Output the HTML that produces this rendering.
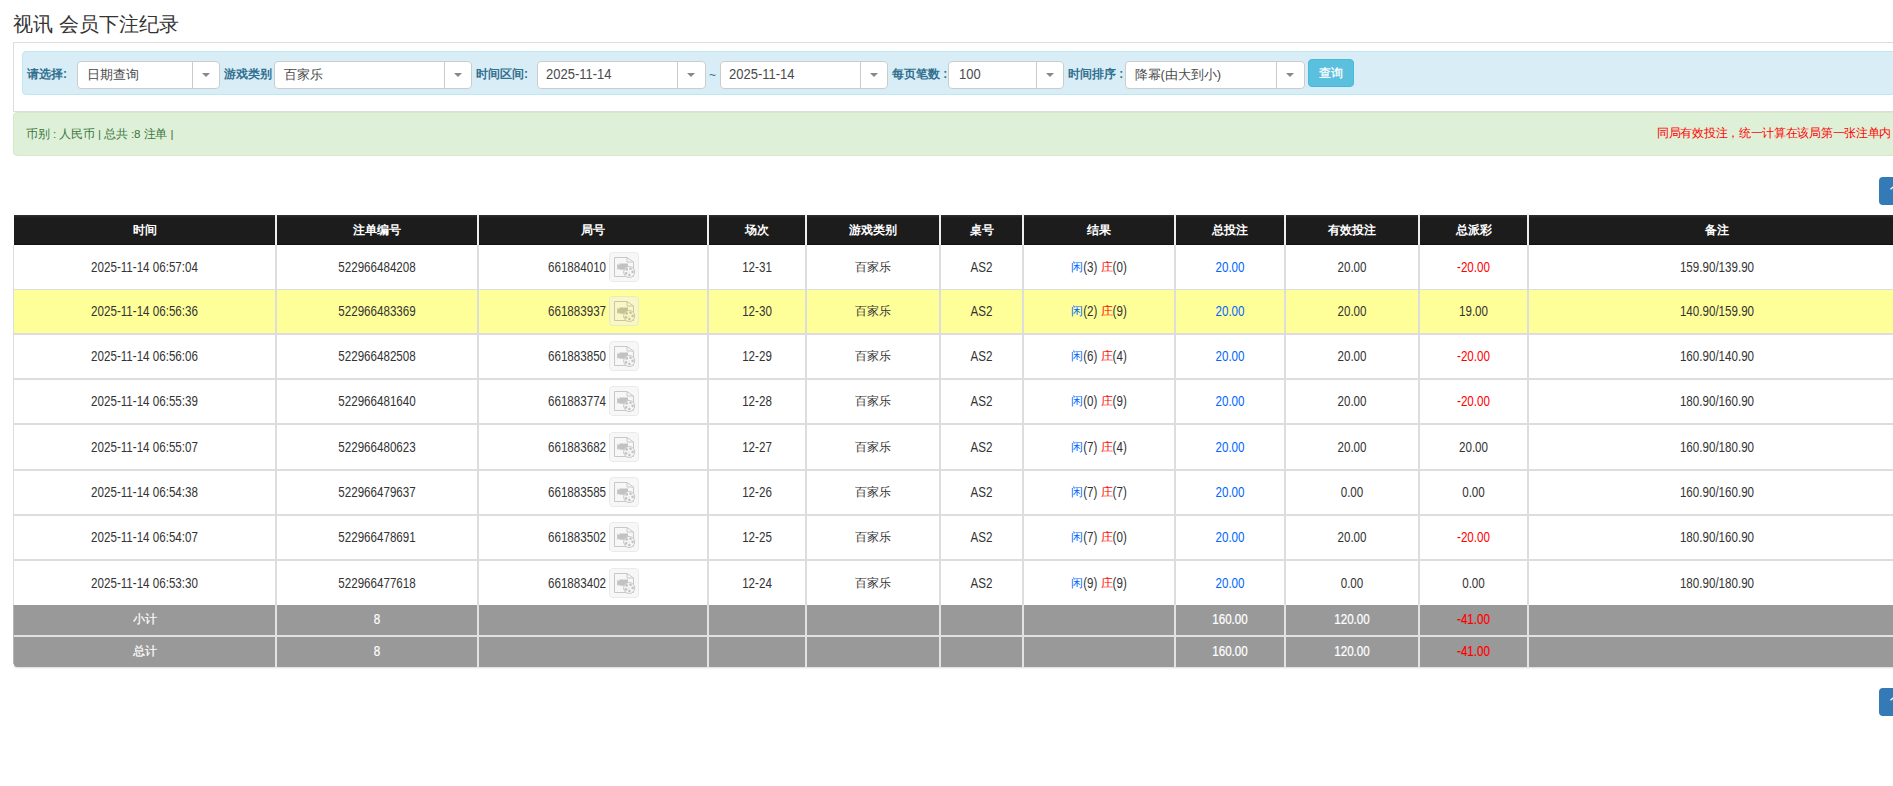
<!DOCTYPE html>
<html><head><meta charset="utf-8"><title>视讯 会员下注纪录</title>
<style>
html,body{margin:0;padding:0;background:#fff;}
body{width:1893px;height:786px;overflow:hidden;position:relative;font-family:"Liberation Sans",sans-serif;color:#333;}
.a{position:absolute;}
.t{white-space:nowrap;}
.title{left:13px;top:10px;font-size:20px;line-height:28px;color:#333;}
.panel{left:13px;top:42px;width:1900px;height:68px;border:1px solid #ddd;border-right:none;background:#fff;}
.info{left:22px;top:51px;width:1900px;height:42px;border:1px solid #bce8f1;border-radius:4px;background:#d9edf7;}
.lbl{font-size:12px;font-weight:bold;color:#31708f;line-height:16px;top:66px;}
.sel{top:61px;height:26px;border:1px solid #ccc;border-radius:4px;background:#fff;}
.sel .dv{position:absolute;top:0;bottom:0;width:1px;background:#ccc;}
.sel .tx{position:absolute;left:8.5px;top:-0.5px;line-height:26px;font-size:13px;color:#4a4a4a;white-space:nowrap;}
.sel .ct{position:absolute;top:11px;width:0;height:0;border-left:4px solid transparent;border-right:4px solid transparent;border-top:4px solid #888;}
.btn{left:1308px;top:59px;width:44px;height:26px;border:1px solid #46b8da;border-radius:4px;background:#5bc0de;color:#fff;font-size:12px;line-height:26px;text-align:center;-webkit-text-stroke-width:0.3px;}
.succ{left:13px;top:112px;width:1890px;height:42px;border:1px solid #d6e9c6;border-radius:4px;background:#dff0d8;}
.stx{left:26px;top:126px;font-size:11.6px;letter-spacing:-0.1px;line-height:16px;color:#3c763d;}
.rtx{left:1657px;top:125px;font-size:12px;letter-spacing:-0.3px;line-height:16px;color:#f00;}
.pg{left:1879px;width:40px;height:28px;background:#337ab7;border-radius:4px;color:#fff;font-size:12px;line-height:28px;}
.pg span{position:absolute;left:12px;top:-1px;}
.th{top:215px;height:30px;background:linear-gradient(#303030,#1c1c1c 3px,#1c1c1c 28px,#101010);}
.htx{top:215px;height:30px;line-height:30px;font-size:12px;font-weight:bold;color:#fff;text-align:center;}
.row{left:14px;width:1891px;}
.ctx{font-size:11.6px;line-height:16px;text-align:center;white-space:nowrap;}
.n{transform:scaleY(1.2);}
.ni{display:inline-block;transform:scaleY(1.2);}
.hl{background:#ffff99;}
.gray{background:#999;}
.hline{left:13px;width:1892px;background:#ddd;}
.vline{width:2px;background:#ddd;}
.blue{color:#0066ff;}
.red{color:#f00;}
.ib{position:absolute;width:28px;height:28px;border:1px solid #dadada;border-radius:4px;background:#f2f2f2;opacity:.55;}
.ib svg{position:absolute;left:-1px;top:-1px;}

.stot{font-weight:normal;color:#fff;-webkit-text-stroke-width:0.2px;font-size:11.6px;line-height:16px;text-align:center;white-space:nowrap;}
</style></head><body>

<div class="a t title">视讯 会员下注纪录</div>
<div class="a panel"></div>
<div class="a info"></div>
<div class="a t lbl" style="left:27px">请选择:</div>
<div class="a t lbl" style="left:224px">游戏类别</div>
<div class="a t lbl" style="left:476px">时间区间:</div>
<div class="a t lbl" style="left:892px">每页笔数 :</div>
<div class="a t lbl" style="left:1068px">时间排序 :</div>
<div class="a sel" style="left:77px;width:141px"><div class="tx">日期查询</div><div class="dv" style="left:114px"></div><div class="ct" style="left:124px"></div></div>
<div class="a sel" style="left:274px;width:196px"><div class="tx">百家乐</div><div class="dv" style="left:169px"></div><div class="ct" style="left:179px"></div></div>
<div class="a sel" style="left:537px;width:167px"><div class="tx" style="left:8px;top:0"><span class="ni" style="transform:scaleY(1.12)">2025-11-14</span></div><div class="dv" style="left:139px"></div><div class="ct" style="left:149px"></div></div>
<div class="a sel" style="left:720px;width:166px"><div class="tx" style="left:8px;top:0"><span class="ni" style="transform:scaleY(1.12)">2025-11-14</span></div><div class="dv" style="left:139px"></div><div class="ct" style="left:149px"></div></div>
<div class="a sel" style="left:948px;width:114px"><div class="tx" style="left:10px;top:0"><span class="ni" style="transform:scaleY(1.12)">100</span></div><div class="dv" style="left:87px"></div><div class="ct" style="left:97px"></div></div>
<div class="a sel" style="left:1125px;width:178px"><div class="tx">降幂(由大到小)</div><div class="dv" style="left:150px"></div><div class="ct" style="left:160px"></div></div>
<div class="a t" style="left:709px;top:67px;font-size:12px;line-height:16px;color:#31708f">~</div>
<div class="a btn">查询</div>
<div class="a succ"></div>
<div class="a t stx">币别 : 人民币 | 总共 :8 注单 |</div>
<div class="a t rtx">同局有效投注，统一计算在该局第一张注单内</div>
<div class="a pg" style="top:177px"><svg width="40" height="28" style="position:absolute;left:0;top:0"><path d="M11.5 12.3L14.5 9.6" stroke="#fff" stroke-width="1.3"/></svg></div>
<div class="a pg" style="top:688px"><svg width="40" height="28" style="position:absolute;left:0;top:0"><path d="M11.5 12.3L14.5 9.6" stroke="#fff" stroke-width="1.3"/></svg></div>
<div class="a th" style="left:14px;width:1891px"></div>
<div class="a htx" style="left:14px;width:261px">时间</div>
<div class="a htx" style="left:277px;width:200px">注单编号</div>
<div class="a htx" style="left:479px;width:228px">局号</div>
<div class="a htx" style="left:709px;width:96px">场次</div>
<div class="a htx" style="left:807px;width:132px">游戏类别</div>
<div class="a htx" style="left:941px;width:81px">桌号</div>
<div class="a htx" style="left:1024px;width:150px">结果</div>
<div class="a htx" style="left:1176px;width:108px">总投注</div>
<div class="a htx" style="left:1286px;width:132px">有效投注</div>
<div class="a htx" style="left:1420px;width:107px">总派彩</div>
<div class="a htx" style="left:1529px;width:376px">备注</div>
<div class="a row hl" style="top:290px;height:43px"></div>
<div class="a row gray" style="top:605px;height:30px"></div>
<div class="a row gray" style="top:637px;height:30px;border-bottom-left-radius:3px"></div>
<div class="a hline" style="top:635px;height:2px;background:#e2e2e2"></div>
<div class="a hline" style="top:289px;height:1px"></div>
<div class="a hline" style="top:333px;height:2px"></div>
<div class="a hline" style="top:378px;height:2px"></div>
<div class="a hline" style="top:423px;height:2px"></div>
<div class="a hline" style="top:469px;height:2px"></div>
<div class="a hline" style="top:514px;height:2px"></div>
<div class="a hline" style="top:559px;height:2px"></div>
<div class="a" style="left:14px;top:637px;width:1891px;height:30px;border-bottom-left-radius:3px;box-shadow:0 1px 2px rgba(0,0,0,.15)"></div>
<div class="a" style="left:13px;top:245px;width:1px;height:360px;background:#ddd"></div>
<div class="a" style="left:13px;top:605px;width:1px;height:59px;background:#b4b4b4"></div>
<div class="a vline" style="left:275px;top:214px;height:31px;background:#eee"></div>
<div class="a vline" style="left:275px;top:245px;height:360px"></div>
<div class="a vline" style="left:275px;top:605px;height:62px;background:#e2e2e2"></div>
<div class="a vline" style="left:477px;top:214px;height:31px;background:#eee"></div>
<div class="a vline" style="left:477px;top:245px;height:360px"></div>
<div class="a vline" style="left:477px;top:605px;height:62px;background:#e2e2e2"></div>
<div class="a vline" style="left:707px;top:214px;height:31px;background:#eee"></div>
<div class="a vline" style="left:707px;top:245px;height:360px"></div>
<div class="a vline" style="left:707px;top:605px;height:62px;background:#e2e2e2"></div>
<div class="a vline" style="left:805px;top:214px;height:31px;background:#eee"></div>
<div class="a vline" style="left:805px;top:245px;height:360px"></div>
<div class="a vline" style="left:805px;top:605px;height:62px;background:#e2e2e2"></div>
<div class="a vline" style="left:939px;top:214px;height:31px;background:#eee"></div>
<div class="a vline" style="left:939px;top:245px;height:360px"></div>
<div class="a vline" style="left:939px;top:605px;height:62px;background:#e2e2e2"></div>
<div class="a vline" style="left:1022px;top:214px;height:31px;background:#eee"></div>
<div class="a vline" style="left:1022px;top:245px;height:360px"></div>
<div class="a vline" style="left:1022px;top:605px;height:62px;background:#e2e2e2"></div>
<div class="a vline" style="left:1174px;top:214px;height:31px;background:#eee"></div>
<div class="a vline" style="left:1174px;top:245px;height:360px"></div>
<div class="a vline" style="left:1174px;top:605px;height:62px;background:#e2e2e2"></div>
<div class="a vline" style="left:1284px;top:214px;height:31px;background:#eee"></div>
<div class="a vline" style="left:1284px;top:245px;height:360px"></div>
<div class="a vline" style="left:1284px;top:605px;height:62px;background:#e2e2e2"></div>
<div class="a vline" style="left:1418px;top:214px;height:31px;background:#eee"></div>
<div class="a vline" style="left:1418px;top:245px;height:360px"></div>
<div class="a vline" style="left:1418px;top:605px;height:62px;background:#e2e2e2"></div>
<div class="a vline" style="left:1527px;top:214px;height:31px;background:#eee"></div>
<div class="a vline" style="left:1527px;top:245px;height:360px"></div>
<div class="a vline" style="left:1527px;top:605px;height:62px;background:#e2e2e2"></div>
<div class="a ctx n" style="left:14px;width:261px;top:259px">2025-11-14 06:57:04</div>
<div class="a ctx n" style="left:277px;width:200px;top:259px">522966484208</div>
<div class="a ctx n" style="left:548px;top:259px;">661884010</div>
<div class="ib" style="left:609px;top:252px"><svg width="30" height="30" viewBox="0 0 30 30"><g fill="none" stroke="#9c9c9c" stroke-width="1"><path d="M5.5 5.5h12.5l6.5 4.5v14.5h-19z"/><path d="M18 5.5v4.5h6.5"/></g><path d="M8.2 11.8l2.1 1.4V11.6h8.7v6.2h-8.7v-1.4l-2.1 1.4z" fill="#929292"/><circle cx="20.2" cy="20" r="5.5" fill="#f2f2f2" stroke="#9a9a9a"/><g fill="#929292"><circle cx="17.7" cy="17.4" r="1.3"/><circle cx="21.5" cy="16.7" r="1.3"/><circle cx="23.6" cy="19.9" r="1.3"/><circle cx="20.4" cy="23" r="1.3"/><circle cx="17.1" cy="21.4" r="1.3"/><circle cx="20" cy="19.9" r=".5"/></g></svg></div>
<div class="a ctx n" style="left:709px;width:96px;top:259px">12-31</div>
<div class="a ctx" style="left:807px;width:132px;top:259px">百家乐</div>
<div class="a ctx n" style="left:941px;width:81px;top:259px">AS2</div>
<div class="a ctx" style="left:1024px;width:150px;top:259px"><span class="blue">闲</span><span class="ni">(3)</span> <span class="red">庄</span><span class="ni">(0)</span></div>
<div class="a ctx n" style="left:1176px;width:108px;top:259px"><span class="blue">20.00</span></div>
<div class="a ctx n" style="left:1286px;width:132px;top:259px">20.00</div>
<div class="a ctx n" style="left:1420px;width:107px;top:259px"><span class="red">-20.00</span></div>
<div class="a ctx n" style="left:1529px;width:376px;top:259px">159.90/139.90</div>
<div class="a ctx n" style="left:14px;width:261px;top:303px">2025-11-14 06:56:36</div>
<div class="a ctx n" style="left:277px;width:200px;top:303px">522966483369</div>
<div class="a ctx n" style="left:548px;top:303px;">661883937</div>
<div class="hl" style="position:absolute;left:0;top:0"><div class="ib" style="left:609px;top:296px"><svg width="30" height="30" viewBox="0 0 30 30"><g fill="none" stroke="#9c9c9c" stroke-width="1"><path d="M5.5 5.5h12.5l6.5 4.5v14.5h-19z"/><path d="M18 5.5v4.5h6.5"/></g><path d="M8.2 11.8l2.1 1.4V11.6h8.7v6.2h-8.7v-1.4l-2.1 1.4z" fill="#929292"/><circle cx="20.2" cy="20" r="5.5" fill="#f2f2f2" stroke="#9a9a9a"/><g fill="#929292"><circle cx="17.7" cy="17.4" r="1.3"/><circle cx="21.5" cy="16.7" r="1.3"/><circle cx="23.6" cy="19.9" r="1.3"/><circle cx="20.4" cy="23" r="1.3"/><circle cx="17.1" cy="21.4" r="1.3"/><circle cx="20" cy="19.9" r=".5"/></g></svg></div></div>
<div class="a ctx n" style="left:709px;width:96px;top:303px">12-30</div>
<div class="a ctx" style="left:807px;width:132px;top:303px">百家乐</div>
<div class="a ctx n" style="left:941px;width:81px;top:303px">AS2</div>
<div class="a ctx" style="left:1024px;width:150px;top:303px"><span class="blue">闲</span><span class="ni">(2)</span> <span class="red">庄</span><span class="ni">(9)</span></div>
<div class="a ctx n" style="left:1176px;width:108px;top:303px"><span class="blue">20.00</span></div>
<div class="a ctx n" style="left:1286px;width:132px;top:303px">20.00</div>
<div class="a ctx n" style="left:1420px;width:107px;top:303px">19.00</div>
<div class="a ctx n" style="left:1529px;width:376px;top:303px">140.90/159.90</div>
<div class="a ctx n" style="left:14px;width:261px;top:348px">2025-11-14 06:56:06</div>
<div class="a ctx n" style="left:277px;width:200px;top:348px">522966482508</div>
<div class="a ctx n" style="left:548px;top:348px;">661883850</div>
<div class="ib" style="left:609px;top:341px"><svg width="30" height="30" viewBox="0 0 30 30"><g fill="none" stroke="#9c9c9c" stroke-width="1"><path d="M5.5 5.5h12.5l6.5 4.5v14.5h-19z"/><path d="M18 5.5v4.5h6.5"/></g><path d="M8.2 11.8l2.1 1.4V11.6h8.7v6.2h-8.7v-1.4l-2.1 1.4z" fill="#929292"/><circle cx="20.2" cy="20" r="5.5" fill="#f2f2f2" stroke="#9a9a9a"/><g fill="#929292"><circle cx="17.7" cy="17.4" r="1.3"/><circle cx="21.5" cy="16.7" r="1.3"/><circle cx="23.6" cy="19.9" r="1.3"/><circle cx="20.4" cy="23" r="1.3"/><circle cx="17.1" cy="21.4" r="1.3"/><circle cx="20" cy="19.9" r=".5"/></g></svg></div>
<div class="a ctx n" style="left:709px;width:96px;top:348px">12-29</div>
<div class="a ctx" style="left:807px;width:132px;top:348px">百家乐</div>
<div class="a ctx n" style="left:941px;width:81px;top:348px">AS2</div>
<div class="a ctx" style="left:1024px;width:150px;top:348px"><span class="blue">闲</span><span class="ni">(6)</span> <span class="red">庄</span><span class="ni">(4)</span></div>
<div class="a ctx n" style="left:1176px;width:108px;top:348px"><span class="blue">20.00</span></div>
<div class="a ctx n" style="left:1286px;width:132px;top:348px">20.00</div>
<div class="a ctx n" style="left:1420px;width:107px;top:348px"><span class="red">-20.00</span></div>
<div class="a ctx n" style="left:1529px;width:376px;top:348px">160.90/140.90</div>
<div class="a ctx n" style="left:14px;width:261px;top:393px">2025-11-14 06:55:39</div>
<div class="a ctx n" style="left:277px;width:200px;top:393px">522966481640</div>
<div class="a ctx n" style="left:548px;top:393px;">661883774</div>
<div class="ib" style="left:609px;top:386px"><svg width="30" height="30" viewBox="0 0 30 30"><g fill="none" stroke="#9c9c9c" stroke-width="1"><path d="M5.5 5.5h12.5l6.5 4.5v14.5h-19z"/><path d="M18 5.5v4.5h6.5"/></g><path d="M8.2 11.8l2.1 1.4V11.6h8.7v6.2h-8.7v-1.4l-2.1 1.4z" fill="#929292"/><circle cx="20.2" cy="20" r="5.5" fill="#f2f2f2" stroke="#9a9a9a"/><g fill="#929292"><circle cx="17.7" cy="17.4" r="1.3"/><circle cx="21.5" cy="16.7" r="1.3"/><circle cx="23.6" cy="19.9" r="1.3"/><circle cx="20.4" cy="23" r="1.3"/><circle cx="17.1" cy="21.4" r="1.3"/><circle cx="20" cy="19.9" r=".5"/></g></svg></div>
<div class="a ctx n" style="left:709px;width:96px;top:393px">12-28</div>
<div class="a ctx" style="left:807px;width:132px;top:393px">百家乐</div>
<div class="a ctx n" style="left:941px;width:81px;top:393px">AS2</div>
<div class="a ctx" style="left:1024px;width:150px;top:393px"><span class="blue">闲</span><span class="ni">(0)</span> <span class="red">庄</span><span class="ni">(9)</span></div>
<div class="a ctx n" style="left:1176px;width:108px;top:393px"><span class="blue">20.00</span></div>
<div class="a ctx n" style="left:1286px;width:132px;top:393px">20.00</div>
<div class="a ctx n" style="left:1420px;width:107px;top:393px"><span class="red">-20.00</span></div>
<div class="a ctx n" style="left:1529px;width:376px;top:393px">180.90/160.90</div>
<div class="a ctx n" style="left:14px;width:261px;top:439px">2025-11-14 06:55:07</div>
<div class="a ctx n" style="left:277px;width:200px;top:439px">522966480623</div>
<div class="a ctx n" style="left:548px;top:439px;">661883682</div>
<div class="ib" style="left:609px;top:432px"><svg width="30" height="30" viewBox="0 0 30 30"><g fill="none" stroke="#9c9c9c" stroke-width="1"><path d="M5.5 5.5h12.5l6.5 4.5v14.5h-19z"/><path d="M18 5.5v4.5h6.5"/></g><path d="M8.2 11.8l2.1 1.4V11.6h8.7v6.2h-8.7v-1.4l-2.1 1.4z" fill="#929292"/><circle cx="20.2" cy="20" r="5.5" fill="#f2f2f2" stroke="#9a9a9a"/><g fill="#929292"><circle cx="17.7" cy="17.4" r="1.3"/><circle cx="21.5" cy="16.7" r="1.3"/><circle cx="23.6" cy="19.9" r="1.3"/><circle cx="20.4" cy="23" r="1.3"/><circle cx="17.1" cy="21.4" r="1.3"/><circle cx="20" cy="19.9" r=".5"/></g></svg></div>
<div class="a ctx n" style="left:709px;width:96px;top:439px">12-27</div>
<div class="a ctx" style="left:807px;width:132px;top:439px">百家乐</div>
<div class="a ctx n" style="left:941px;width:81px;top:439px">AS2</div>
<div class="a ctx" style="left:1024px;width:150px;top:439px"><span class="blue">闲</span><span class="ni">(7)</span> <span class="red">庄</span><span class="ni">(4)</span></div>
<div class="a ctx n" style="left:1176px;width:108px;top:439px"><span class="blue">20.00</span></div>
<div class="a ctx n" style="left:1286px;width:132px;top:439px">20.00</div>
<div class="a ctx n" style="left:1420px;width:107px;top:439px">20.00</div>
<div class="a ctx n" style="left:1529px;width:376px;top:439px">160.90/180.90</div>
<div class="a ctx n" style="left:14px;width:261px;top:484px">2025-11-14 06:54:38</div>
<div class="a ctx n" style="left:277px;width:200px;top:484px">522966479637</div>
<div class="a ctx n" style="left:548px;top:484px;">661883585</div>
<div class="ib" style="left:609px;top:477px"><svg width="30" height="30" viewBox="0 0 30 30"><g fill="none" stroke="#9c9c9c" stroke-width="1"><path d="M5.5 5.5h12.5l6.5 4.5v14.5h-19z"/><path d="M18 5.5v4.5h6.5"/></g><path d="M8.2 11.8l2.1 1.4V11.6h8.7v6.2h-8.7v-1.4l-2.1 1.4z" fill="#929292"/><circle cx="20.2" cy="20" r="5.5" fill="#f2f2f2" stroke="#9a9a9a"/><g fill="#929292"><circle cx="17.7" cy="17.4" r="1.3"/><circle cx="21.5" cy="16.7" r="1.3"/><circle cx="23.6" cy="19.9" r="1.3"/><circle cx="20.4" cy="23" r="1.3"/><circle cx="17.1" cy="21.4" r="1.3"/><circle cx="20" cy="19.9" r=".5"/></g></svg></div>
<div class="a ctx n" style="left:709px;width:96px;top:484px">12-26</div>
<div class="a ctx" style="left:807px;width:132px;top:484px">百家乐</div>
<div class="a ctx n" style="left:941px;width:81px;top:484px">AS2</div>
<div class="a ctx" style="left:1024px;width:150px;top:484px"><span class="blue">闲</span><span class="ni">(7)</span> <span class="red">庄</span><span class="ni">(7)</span></div>
<div class="a ctx n" style="left:1176px;width:108px;top:484px"><span class="blue">20.00</span></div>
<div class="a ctx n" style="left:1286px;width:132px;top:484px">0.00</div>
<div class="a ctx n" style="left:1420px;width:107px;top:484px">0.00</div>
<div class="a ctx n" style="left:1529px;width:376px;top:484px">160.90/160.90</div>
<div class="a ctx n" style="left:14px;width:261px;top:529px">2025-11-14 06:54:07</div>
<div class="a ctx n" style="left:277px;width:200px;top:529px">522966478691</div>
<div class="a ctx n" style="left:548px;top:529px;">661883502</div>
<div class="ib" style="left:609px;top:522px"><svg width="30" height="30" viewBox="0 0 30 30"><g fill="none" stroke="#9c9c9c" stroke-width="1"><path d="M5.5 5.5h12.5l6.5 4.5v14.5h-19z"/><path d="M18 5.5v4.5h6.5"/></g><path d="M8.2 11.8l2.1 1.4V11.6h8.7v6.2h-8.7v-1.4l-2.1 1.4z" fill="#929292"/><circle cx="20.2" cy="20" r="5.5" fill="#f2f2f2" stroke="#9a9a9a"/><g fill="#929292"><circle cx="17.7" cy="17.4" r="1.3"/><circle cx="21.5" cy="16.7" r="1.3"/><circle cx="23.6" cy="19.9" r="1.3"/><circle cx="20.4" cy="23" r="1.3"/><circle cx="17.1" cy="21.4" r="1.3"/><circle cx="20" cy="19.9" r=".5"/></g></svg></div>
<div class="a ctx n" style="left:709px;width:96px;top:529px">12-25</div>
<div class="a ctx" style="left:807px;width:132px;top:529px">百家乐</div>
<div class="a ctx n" style="left:941px;width:81px;top:529px">AS2</div>
<div class="a ctx" style="left:1024px;width:150px;top:529px"><span class="blue">闲</span><span class="ni">(7)</span> <span class="red">庄</span><span class="ni">(0)</span></div>
<div class="a ctx n" style="left:1176px;width:108px;top:529px"><span class="blue">20.00</span></div>
<div class="a ctx n" style="left:1286px;width:132px;top:529px">20.00</div>
<div class="a ctx n" style="left:1420px;width:107px;top:529px"><span class="red">-20.00</span></div>
<div class="a ctx n" style="left:1529px;width:376px;top:529px">180.90/160.90</div>
<div class="a ctx n" style="left:14px;width:261px;top:575px">2025-11-14 06:53:30</div>
<div class="a ctx n" style="left:277px;width:200px;top:575px">522966477618</div>
<div class="a ctx n" style="left:548px;top:575px;">661883402</div>
<div class="ib" style="left:609px;top:568px"><svg width="30" height="30" viewBox="0 0 30 30"><g fill="none" stroke="#9c9c9c" stroke-width="1"><path d="M5.5 5.5h12.5l6.5 4.5v14.5h-19z"/><path d="M18 5.5v4.5h6.5"/></g><path d="M8.2 11.8l2.1 1.4V11.6h8.7v6.2h-8.7v-1.4l-2.1 1.4z" fill="#929292"/><circle cx="20.2" cy="20" r="5.5" fill="#f2f2f2" stroke="#9a9a9a"/><g fill="#929292"><circle cx="17.7" cy="17.4" r="1.3"/><circle cx="21.5" cy="16.7" r="1.3"/><circle cx="23.6" cy="19.9" r="1.3"/><circle cx="20.4" cy="23" r="1.3"/><circle cx="17.1" cy="21.4" r="1.3"/><circle cx="20" cy="19.9" r=".5"/></g></svg></div>
<div class="a ctx n" style="left:709px;width:96px;top:575px">12-24</div>
<div class="a ctx" style="left:807px;width:132px;top:575px">百家乐</div>
<div class="a ctx n" style="left:941px;width:81px;top:575px">AS2</div>
<div class="a ctx" style="left:1024px;width:150px;top:575px"><span class="blue">闲</span><span class="ni">(9)</span> <span class="red">庄</span><span class="ni">(9)</span></div>
<div class="a ctx n" style="left:1176px;width:108px;top:575px"><span class="blue">20.00</span></div>
<div class="a ctx n" style="left:1286px;width:132px;top:575px">0.00</div>
<div class="a ctx n" style="left:1420px;width:107px;top:575px">0.00</div>
<div class="a ctx n" style="left:1529px;width:376px;top:575px">180.90/180.90</div>
<div class="a stot" style="left:14px;width:261px;top:611px"><span style="font-weight:normal">小计</span></div>
<div class="a stot" style="left:277px;width:200px;top:611px"><span class="ni">8</span></div>
<div class="a stot" style="left:1176px;width:108px;top:611px"><span class="ni">160.00</span></div>
<div class="a stot" style="left:1286px;width:132px;top:611px"><span class="ni">120.00</span></div>
<div class="a stot" style="left:1420px;width:107px;top:611px"><span class="red ni">-41.00</span></div>
<div class="a stot" style="left:14px;width:261px;top:643px"><span style="font-weight:normal">总计</span></div>
<div class="a stot" style="left:277px;width:200px;top:643px"><span class="ni">8</span></div>
<div class="a stot" style="left:1176px;width:108px;top:643px"><span class="ni">160.00</span></div>
<div class="a stot" style="left:1286px;width:132px;top:643px"><span class="ni">120.00</span></div>
<div class="a stot" style="left:1420px;width:107px;top:643px"><span class="red ni">-41.00</span></div>
</body></html>
